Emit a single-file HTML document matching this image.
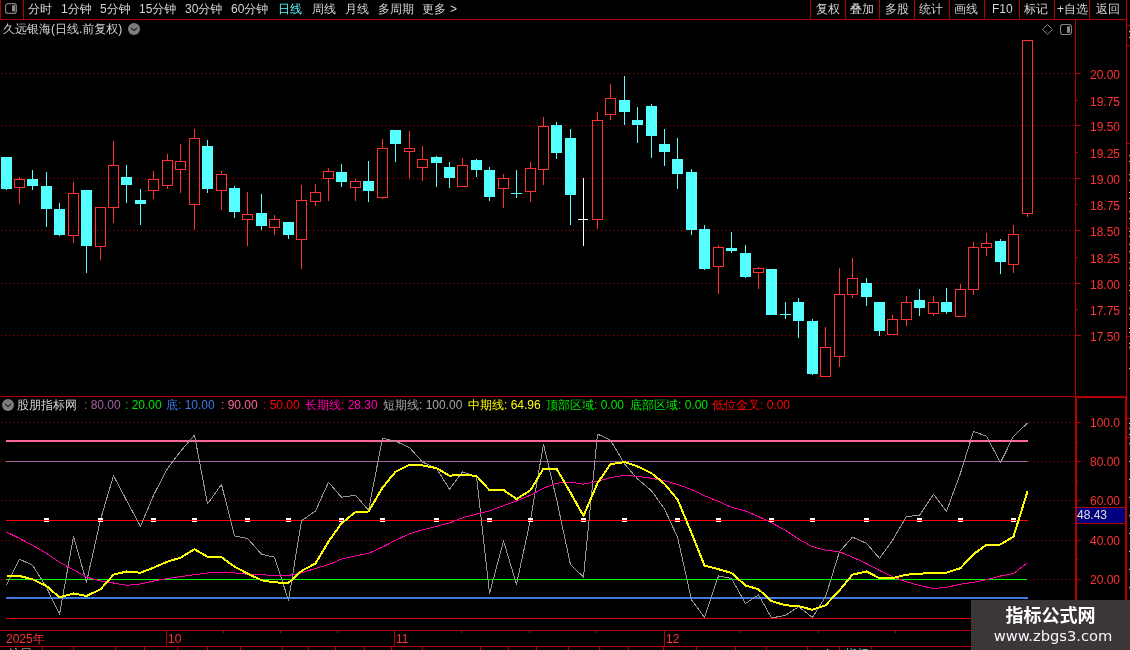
<!DOCTYPE html>
<html><head><meta charset="utf-8"><title>chart</title>
<style>
html,body{margin:0;padding:0;background:#000;}
body{width:1130px;height:650px;position:relative;overflow:hidden;font-family:"Liberation Sans","WenQuanYi Zen Hei","Noto Sans CJK SC",sans-serif;}
.t{position:absolute;white-space:nowrap;line-height:14px;font-size:12px;font-family:"Liberation Sans","WenQuanYi Zen Hei","Noto Sans CJK SC",sans-serif;}
svg{position:absolute;left:0;top:0;}
</style></head><body>
<svg width="1130" height="650" viewBox="0 0 1130 650" shape-rendering="crispEdges">
<line x1="1" y1="73.5" x2="1075" y2="73.5" stroke="#b00000" stroke-width="1" stroke-dasharray="1 3"/>
<line x1="1" y1="125.5" x2="1075" y2="125.5" stroke="#b00000" stroke-width="1" stroke-dasharray="1 3"/>
<line x1="1" y1="178.5" x2="1075" y2="178.5" stroke="#b00000" stroke-width="1" stroke-dasharray="1 3"/>
<line x1="1" y1="230.5" x2="1075" y2="230.5" stroke="#b00000" stroke-width="1" stroke-dasharray="1 3"/>
<line x1="1" y1="283.5" x2="1075" y2="283.5" stroke="#b00000" stroke-width="1" stroke-dasharray="1 3"/>
<line x1="1" y1="335.5" x2="1075" y2="335.5" stroke="#b00000" stroke-width="1" stroke-dasharray="1 3"/>
<line x1="1" y1="422.5" x2="1075" y2="422.5" stroke="#b00000" stroke-width="1" stroke-dasharray="1 3"/>
<line x1="1" y1="461.5" x2="1075" y2="461.5" stroke="#b00000" stroke-width="1" stroke-dasharray="1 3"/>
<line x1="1" y1="500.5" x2="1075" y2="500.5" stroke="#b00000" stroke-width="1" stroke-dasharray="1 3"/>
<line x1="1" y1="540.5" x2="1075" y2="540.5" stroke="#b00000" stroke-width="1" stroke-dasharray="1 3"/>
<line x1="1" y1="579.5" x2="1075" y2="579.5" stroke="#b00000" stroke-width="1" stroke-dasharray="1 3"/>
<rect x="0" y="19" width="1127" height="1" fill="#b40000"/>
<rect x="0" y="0" width="1" height="20" fill="#b40000"/>
<rect x="23" y="0" width="1" height="20" fill="#b40000"/>
<rect x="810" y="0" width="1" height="19" fill="#b40000"/>
<rect x="845" y="0" width="1" height="19" fill="#b40000"/>
<rect x="879" y="0" width="1" height="19" fill="#b40000"/>
<rect x="914" y="0" width="1" height="19" fill="#b40000"/>
<rect x="949" y="0" width="1" height="19" fill="#b40000"/>
<rect x="984" y="0" width="1" height="19" fill="#b40000"/>
<rect x="1019" y="0" width="1" height="19" fill="#b40000"/>
<rect x="1054" y="0" width="1" height="19" fill="#b40000"/>
<rect x="1089" y="0" width="1" height="19" fill="#b40000"/>
<rect x="1126" y="0" width="1" height="650" fill="#b40000"/>
<rect x="1075" y="20" width="1" height="377" fill="#b40000"/>
<rect x="0" y="396" width="1075" height="1" fill="#b40000"/>
<rect x="1075" y="396" width="52" height="2" fill="#b40000"/>
<rect x="1075" y="396" width="2" height="235" fill="#b40000"/>
<rect x="1125" y="396" width="2" height="235" fill="#b40000"/>
<rect x="0" y="630" width="1127" height="1" fill="#b40000"/>
<rect x="0" y="646" width="971" height="1" fill="#b40000"/>
<rect x="1076" y="73" width="5" height="1" fill="#b40000"/>
<rect x="1076" y="100" width="2" height="1" fill="#b40000"/>
<rect x="1076" y="125" width="5" height="1" fill="#b40000"/>
<rect x="1076" y="152" width="2" height="1" fill="#b40000"/>
<rect x="1076" y="178" width="5" height="1" fill="#b40000"/>
<rect x="1076" y="204" width="2" height="1" fill="#b40000"/>
<rect x="1076" y="230" width="5" height="1" fill="#b40000"/>
<rect x="1076" y="257" width="2" height="1" fill="#b40000"/>
<rect x="1076" y="283" width="5" height="1" fill="#b40000"/>
<rect x="1076" y="309" width="2" height="1" fill="#b40000"/>
<rect x="1076" y="335" width="5" height="1" fill="#b40000"/>
<rect x="1077" y="422" width="4" height="1" fill="#b40000"/>
<rect x="1077" y="461" width="4" height="1" fill="#b40000"/>
<rect x="1077" y="500" width="4" height="1" fill="#b40000"/>
<rect x="1077" y="540" width="4" height="1" fill="#b40000"/>
<rect x="1077" y="579" width="4" height="1" fill="#b40000"/>
<rect x="1077" y="442" width="1" height="1" fill="#b40000"/>
<rect x="1077" y="481" width="1" height="1" fill="#b40000"/>
<rect x="1077" y="520" width="1" height="1" fill="#b40000"/>
<rect x="1077" y="559" width="1" height="1" fill="#b40000"/>
<rect x="1127" y="25" width="3" height="1" fill="#b40000"/>
<rect x="1127" y="45" width="3" height="1" fill="#b40000"/>
<rect x="1127" y="143" width="3" height="1" fill="#b40000"/>
<rect x="1127" y="228" width="3" height="1" fill="#b40000"/>
<rect x="1127" y="336" width="3" height="1" fill="#b40000"/>
<rect x="1127" y="418" width="3" height="1" fill="#b40000"/>
<rect x="1127" y="437" width="3" height="1" fill="#b40000"/>
<rect x="1129" y="31" width="1" height="1" fill="#c0c0c0"/>
<rect x="1129" y="37" width="1" height="1" fill="#c0c0c0"/>
<rect x="1129" y="155" width="1" height="1" fill="#c0c0c0"/>
<rect x="1129" y="161" width="1" height="1" fill="#c0c0c0"/>
<rect x="1129" y="174" width="1" height="1" fill="#c0c0c0"/>
<rect x="1129" y="180" width="1" height="1" fill="#c0c0c0"/>
<rect x="1129" y="192" width="1" height="1" fill="#c0c0c0"/>
<rect x="1129" y="198" width="1" height="1" fill="#c0c0c0"/>
<rect x="1129" y="211" width="1" height="1" fill="#c0c0c0"/>
<rect x="1129" y="218" width="1" height="1" fill="#c0c0c0"/>
<rect x="1129" y="231" width="1" height="1" fill="#c0c0c0"/>
<rect x="1129" y="236" width="1" height="1" fill="#c0c0c0"/>
<rect x="1129" y="244" width="1" height="1" fill="#c0c0c0"/>
<rect x="1129" y="251" width="1" height="1" fill="#c0c0c0"/>
<rect x="1129" y="262" width="1" height="1" fill="#c0c0c0"/>
<rect x="1129" y="268" width="1" height="1" fill="#c0c0c0"/>
<rect x="1129" y="285" width="1" height="1" fill="#c0c0c0"/>
<rect x="1129" y="290" width="1" height="1" fill="#c0c0c0"/>
<rect x="1129" y="308" width="1" height="1" fill="#c0c0c0"/>
<rect x="1129" y="314" width="1" height="1" fill="#c0c0c0"/>
<rect x="1129" y="328" width="1" height="1" fill="#c0c0c0"/>
<rect x="1129" y="332" width="1" height="1" fill="#c0c0c0"/>
<rect x="1129" y="343" width="1" height="1" fill="#c0c0c0"/>
<rect x="1129" y="347" width="1" height="1" fill="#c0c0c0"/>
<rect x="1129" y="368" width="1" height="1" fill="#c0c0c0"/>
<rect x="1129" y="423" width="1" height="1" fill="#c0c0c0"/>
<rect x="1129" y="428" width="1" height="1" fill="#c0c0c0"/>
<rect x="1129" y="434" width="1" height="1" fill="#c0c0c0"/>
<rect x="1129" y="443" width="1" height="1" fill="#c0c0c0"/>
<rect x="1129" y="461" width="1" height="1" fill="#c0c0c0"/>
<rect x="1129" y="479" width="1" height="1" fill="#c0c0c0"/>
<rect x="1129" y="497" width="1" height="1" fill="#c0c0c0"/>
<rect x="1129" y="515" width="1" height="1" fill="#c0c0c0"/>
<rect x="1129" y="533" width="1" height="1" fill="#c0c0c0"/>
<rect x="1129" y="551" width="1" height="1" fill="#c0c0c0"/>
<rect x="1129" y="569" width="1" height="1" fill="#c0c0c0"/>
<rect x="1129" y="587" width="1" height="1" fill="#c0c0c0"/>
<rect x="6" y="157" width="1" height="33" fill="#54ffff"/>
<rect x="1" y="157" width="11" height="32" fill="#54ffff"/>
<rect x="19" y="177" width="1" height="2" fill="#ff3232"/>
<rect x="19" y="188" width="1" height="16" fill="#ff3232"/>
<rect x="14.5" y="179.5" width="10" height="8" fill="none" stroke="#ff3232" stroke-width="1"/>
<rect x="32" y="170" width="1" height="20" fill="#54ffff"/>
<rect x="27" y="179" width="11" height="7" fill="#54ffff"/>
<rect x="46" y="172" width="1" height="55" fill="#54ffff"/>
<rect x="41" y="186" width="11" height="23" fill="#54ffff"/>
<rect x="59" y="203" width="1" height="33" fill="#54ffff"/>
<rect x="54" y="209" width="11" height="26" fill="#54ffff"/>
<rect x="73" y="182" width="1" height="11" fill="#ff3232"/>
<rect x="73" y="236" width="1" height="7" fill="#ff3232"/>
<rect x="68.5" y="193.5" width="10" height="42" fill="none" stroke="#ff3232" stroke-width="1"/>
<rect x="86" y="190" width="1" height="83" fill="#54ffff"/>
<rect x="81" y="190" width="11" height="56" fill="#54ffff"/>
<rect x="100" y="247" width="1" height="13" fill="#ff3232"/>
<rect x="95.5" y="207.5" width="10" height="39" fill="none" stroke="#ff3232" stroke-width="1"/>
<rect x="113" y="141" width="1" height="24" fill="#ff3232"/>
<rect x="113" y="208" width="1" height="15" fill="#ff3232"/>
<rect x="108.5" y="165.5" width="10" height="42" fill="none" stroke="#ff3232" stroke-width="1"/>
<rect x="126" y="165" width="1" height="38" fill="#54ffff"/>
<rect x="121" y="177" width="11" height="8" fill="#54ffff"/>
<rect x="140" y="189" width="1" height="36" fill="#54ffff"/>
<rect x="135" y="200" width="11" height="4" fill="#54ffff"/>
<rect x="153" y="171" width="1" height="8" fill="#ff3232"/>
<rect x="153" y="191" width="1" height="8" fill="#ff3232"/>
<rect x="148.5" y="179.5" width="10" height="11" fill="none" stroke="#ff3232" stroke-width="1"/>
<rect x="167" y="154" width="1" height="6" fill="#ff3232"/>
<rect x="167" y="186" width="1" height="3" fill="#ff3232"/>
<rect x="162.5" y="160.5" width="10" height="25" fill="none" stroke="#ff3232" stroke-width="1"/>
<rect x="180" y="144" width="1" height="17" fill="#ff3232"/>
<rect x="180" y="170" width="1" height="23" fill="#ff3232"/>
<rect x="175.5" y="161.5" width="10" height="8" fill="none" stroke="#ff3232" stroke-width="1"/>
<rect x="194" y="129" width="1" height="9" fill="#ff3232"/>
<rect x="194" y="205" width="1" height="25" fill="#ff3232"/>
<rect x="189.5" y="138.5" width="10" height="66" fill="none" stroke="#ff3232" stroke-width="1"/>
<rect x="207" y="140" width="1" height="53" fill="#54ffff"/>
<rect x="202" y="146" width="11" height="43" fill="#54ffff"/>
<rect x="221" y="171" width="1" height="3" fill="#ff3232"/>
<rect x="221" y="191" width="1" height="19" fill="#ff3232"/>
<rect x="216.5" y="174.5" width="10" height="16" fill="none" stroke="#ff3232" stroke-width="1"/>
<rect x="234" y="186" width="1" height="32" fill="#54ffff"/>
<rect x="229" y="188" width="11" height="24" fill="#54ffff"/>
<rect x="247" y="192" width="1" height="22" fill="#ff3232"/>
<rect x="247" y="220" width="1" height="26" fill="#ff3232"/>
<rect x="242.5" y="214.5" width="10" height="5" fill="none" stroke="#ff3232" stroke-width="1"/>
<rect x="261" y="194" width="1" height="36" fill="#54ffff"/>
<rect x="256" y="213" width="11" height="13" fill="#54ffff"/>
<rect x="274" y="215" width="1" height="4" fill="#ff3232"/>
<rect x="274" y="228" width="1" height="7" fill="#ff3232"/>
<rect x="269.5" y="219.5" width="10" height="8" fill="none" stroke="#ff3232" stroke-width="1"/>
<rect x="288" y="222" width="1" height="17" fill="#54ffff"/>
<rect x="283" y="222" width="11" height="13" fill="#54ffff"/>
<rect x="301" y="185" width="1" height="15" fill="#ff3232"/>
<rect x="301" y="240" width="1" height="29" fill="#ff3232"/>
<rect x="296.5" y="200.5" width="10" height="39" fill="none" stroke="#ff3232" stroke-width="1"/>
<rect x="315" y="184" width="1" height="8" fill="#ff3232"/>
<rect x="315" y="202" width="1" height="4" fill="#ff3232"/>
<rect x="310.5" y="192.5" width="10" height="9" fill="none" stroke="#ff3232" stroke-width="1"/>
<rect x="328" y="168" width="1" height="3" fill="#ff3232"/>
<rect x="328" y="179" width="1" height="22" fill="#ff3232"/>
<rect x="323.5" y="171.5" width="10" height="7" fill="none" stroke="#ff3232" stroke-width="1"/>
<rect x="341" y="164" width="1" height="23" fill="#54ffff"/>
<rect x="336" y="172" width="11" height="10" fill="#54ffff"/>
<rect x="355" y="179" width="1" height="2" fill="#ff3232"/>
<rect x="355" y="188" width="1" height="13" fill="#ff3232"/>
<rect x="350.5" y="181.5" width="10" height="6" fill="none" stroke="#ff3232" stroke-width="1"/>
<rect x="368" y="161" width="1" height="41" fill="#54ffff"/>
<rect x="363" y="181" width="11" height="10" fill="#54ffff"/>
<rect x="382" y="139" width="1" height="9" fill="#ff3232"/>
<rect x="382" y="198" width="1" height="1" fill="#ff3232"/>
<rect x="377.5" y="148.5" width="10" height="49" fill="none" stroke="#ff3232" stroke-width="1"/>
<rect x="395" y="130" width="1" height="32" fill="#54ffff"/>
<rect x="390" y="130" width="11" height="14" fill="#54ffff"/>
<rect x="409" y="131" width="1" height="17" fill="#ff3232"/>
<rect x="409" y="152" width="1" height="26" fill="#ff3232"/>
<rect x="404.5" y="148.5" width="10" height="3" fill="none" stroke="#ff3232" stroke-width="1"/>
<rect x="422" y="146" width="1" height="13" fill="#ff3232"/>
<rect x="422" y="168" width="1" height="13" fill="#ff3232"/>
<rect x="417.5" y="159.5" width="10" height="8" fill="none" stroke="#ff3232" stroke-width="1"/>
<rect x="436" y="156" width="1" height="31" fill="#54ffff"/>
<rect x="431" y="157" width="11" height="6" fill="#54ffff"/>
<rect x="449" y="162" width="1" height="26" fill="#54ffff"/>
<rect x="444" y="167" width="11" height="11" fill="#54ffff"/>
<rect x="462" y="158" width="1" height="7" fill="#ff3232"/>
<rect x="457.5" y="165.5" width="10" height="21" fill="none" stroke="#ff3232" stroke-width="1"/>
<rect x="476" y="159" width="1" height="18" fill="#54ffff"/>
<rect x="471" y="160" width="11" height="10" fill="#54ffff"/>
<rect x="489" y="167" width="1" height="34" fill="#54ffff"/>
<rect x="484" y="170" width="11" height="27" fill="#54ffff"/>
<rect x="503" y="174" width="1" height="4" fill="#ff3232"/>
<rect x="503" y="189" width="1" height="19" fill="#ff3232"/>
<rect x="498.5" y="178.5" width="10" height="10" fill="none" stroke="#ff3232" stroke-width="1"/>
<rect x="516" y="170" width="1" height="28" fill="#54ffff"/>
<rect x="511" y="193" width="11" height="1" fill="#54ffff"/>
<rect x="530" y="162" width="1" height="6" fill="#ff3232"/>
<rect x="530" y="192" width="1" height="10" fill="#ff3232"/>
<rect x="525.5" y="168.5" width="10" height="23" fill="none" stroke="#ff3232" stroke-width="1"/>
<rect x="543" y="117" width="1" height="9" fill="#ff3232"/>
<rect x="543" y="170" width="1" height="15" fill="#ff3232"/>
<rect x="538.5" y="126.5" width="10" height="43" fill="none" stroke="#ff3232" stroke-width="1"/>
<rect x="556" y="122" width="1" height="37" fill="#54ffff"/>
<rect x="551" y="125" width="11" height="28" fill="#54ffff"/>
<rect x="570" y="129" width="1" height="96" fill="#54ffff"/>
<rect x="565" y="138" width="11" height="57" fill="#54ffff"/>
<rect x="583" y="178" width="1" height="68" fill="#ffffff"/>
<rect x="578" y="219" width="10" height="1" fill="#ffffff"/>
<rect x="597" y="112" width="1" height="8" fill="#ff3232"/>
<rect x="597" y="220" width="1" height="9" fill="#ff3232"/>
<rect x="592.5" y="120.5" width="10" height="99" fill="none" stroke="#ff3232" stroke-width="1"/>
<rect x="610" y="84" width="1" height="14" fill="#ff3232"/>
<rect x="610" y="115" width="1" height="5" fill="#ff3232"/>
<rect x="605.5" y="98.5" width="10" height="16" fill="none" stroke="#ff3232" stroke-width="1"/>
<rect x="624" y="76" width="1" height="49" fill="#54ffff"/>
<rect x="619" y="100" width="11" height="12" fill="#54ffff"/>
<rect x="637" y="107" width="1" height="36" fill="#54ffff"/>
<rect x="632" y="120" width="11" height="5" fill="#54ffff"/>
<rect x="651" y="104" width="1" height="54" fill="#54ffff"/>
<rect x="646" y="106" width="11" height="30" fill="#54ffff"/>
<rect x="664" y="129" width="1" height="37" fill="#54ffff"/>
<rect x="659" y="144" width="11" height="8" fill="#54ffff"/>
<rect x="677" y="138" width="1" height="51" fill="#54ffff"/>
<rect x="672" y="159" width="11" height="15" fill="#54ffff"/>
<rect x="691" y="169" width="1" height="66" fill="#54ffff"/>
<rect x="686" y="172" width="11" height="58" fill="#54ffff"/>
<rect x="704" y="225" width="1" height="45" fill="#54ffff"/>
<rect x="699" y="229" width="11" height="40" fill="#54ffff"/>
<rect x="718" y="245" width="1" height="2" fill="#ff3232"/>
<rect x="718" y="267" width="1" height="27" fill="#ff3232"/>
<rect x="713.5" y="247.5" width="10" height="19" fill="none" stroke="#ff3232" stroke-width="1"/>
<rect x="731" y="232" width="1" height="21" fill="#54ffff"/>
<rect x="726" y="248" width="11" height="3" fill="#54ffff"/>
<rect x="745" y="245" width="1" height="33" fill="#54ffff"/>
<rect x="740" y="253" width="11" height="24" fill="#54ffff"/>
<rect x="758" y="267" width="1" height="1" fill="#ff3232"/>
<rect x="758" y="273" width="1" height="16" fill="#ff3232"/>
<rect x="753.5" y="268.5" width="10" height="4" fill="none" stroke="#ff3232" stroke-width="1"/>
<rect x="771" y="269" width="1" height="46" fill="#54ffff"/>
<rect x="766" y="269" width="11" height="46" fill="#54ffff"/>
<rect x="785" y="302" width="1" height="17" fill="#54ffff"/>
<rect x="780" y="314" width="11" height="1" fill="#54ffff"/>
<rect x="798" y="298" width="1" height="40" fill="#54ffff"/>
<rect x="793" y="302" width="11" height="19" fill="#54ffff"/>
<rect x="812" y="319" width="1" height="56" fill="#54ffff"/>
<rect x="807" y="321" width="11" height="53" fill="#54ffff"/>
<rect x="825" y="327" width="1" height="20" fill="#ff3232"/>
<rect x="820.5" y="347.5" width="10" height="29" fill="none" stroke="#ff3232" stroke-width="1"/>
<rect x="839" y="268" width="1" height="26" fill="#ff3232"/>
<rect x="839" y="357" width="1" height="10" fill="#ff3232"/>
<rect x="834.5" y="294.5" width="10" height="62" fill="none" stroke="#ff3232" stroke-width="1"/>
<rect x="852" y="258" width="1" height="20" fill="#ff3232"/>
<rect x="852" y="295" width="1" height="3" fill="#ff3232"/>
<rect x="847.5" y="278.5" width="10" height="16" fill="none" stroke="#ff3232" stroke-width="1"/>
<rect x="866" y="278" width="1" height="28" fill="#54ffff"/>
<rect x="861" y="283" width="11" height="14" fill="#54ffff"/>
<rect x="879" y="302" width="1" height="34" fill="#54ffff"/>
<rect x="874" y="302" width="11" height="29" fill="#54ffff"/>
<rect x="892" y="315" width="1" height="4" fill="#ff3232"/>
<rect x="887.5" y="319.5" width="10" height="15" fill="none" stroke="#ff3232" stroke-width="1"/>
<rect x="906" y="296" width="1" height="6" fill="#ff3232"/>
<rect x="906" y="320" width="1" height="6" fill="#ff3232"/>
<rect x="901.5" y="302.5" width="10" height="17" fill="none" stroke="#ff3232" stroke-width="1"/>
<rect x="919" y="289" width="1" height="27" fill="#54ffff"/>
<rect x="914" y="300" width="11" height="8" fill="#54ffff"/>
<rect x="933" y="296" width="1" height="6" fill="#ff3232"/>
<rect x="933" y="314" width="1" height="2" fill="#ff3232"/>
<rect x="928.5" y="302.5" width="10" height="11" fill="none" stroke="#ff3232" stroke-width="1"/>
<rect x="946" y="288" width="1" height="26" fill="#54ffff"/>
<rect x="941" y="302" width="11" height="10" fill="#54ffff"/>
<rect x="960" y="284" width="1" height="5" fill="#ff3232"/>
<rect x="955.5" y="289.5" width="10" height="27" fill="none" stroke="#ff3232" stroke-width="1"/>
<rect x="973" y="242" width="1" height="5" fill="#ff3232"/>
<rect x="973" y="290" width="1" height="5" fill="#ff3232"/>
<rect x="968.5" y="247.5" width="10" height="42" fill="none" stroke="#ff3232" stroke-width="1"/>
<rect x="986" y="233" width="1" height="10" fill="#ff3232"/>
<rect x="986" y="248" width="1" height="8" fill="#ff3232"/>
<rect x="981.5" y="243.5" width="10" height="4" fill="none" stroke="#ff3232" stroke-width="1"/>
<rect x="1000" y="239" width="1" height="35" fill="#54ffff"/>
<rect x="995" y="241" width="11" height="21" fill="#54ffff"/>
<rect x="1013" y="225" width="1" height="9" fill="#ff3232"/>
<rect x="1013" y="265" width="1" height="8" fill="#ff3232"/>
<rect x="1008.5" y="234.5" width="10" height="30" fill="none" stroke="#ff3232" stroke-width="1"/>
<rect x="1027" y="214" width="1" height="3" fill="#ff3232"/>
<rect x="1022.5" y="40.5" width="10" height="173" fill="none" stroke="#ff3232" stroke-width="1"/>
<rect x="6" y="440" width="1022" height="2" fill="#ff6699"/>
<rect x="6" y="461" width="1022" height="1" fill="#a066a0"/>
<rect x="6" y="520" width="1022" height="1" fill="#ff0000"/>
<rect x="6" y="579" width="1021" height="1" fill="#00ff00"/>
<rect x="6" y="597" width="1022" height="2" fill="#4078e0"/>
<rect x="6" y="618" width="1022" height="1" fill="#e60000"/>
<polyline points="6.5,584.8 19.5,559.2 32.5,565.2 46.5,587.3 59.5,614.4 73.5,536.4 86.5,582.3 100.5,519.6 113.5,475.7 126.5,500.3 140.5,526.4 153.5,495.3 167.5,468.5 180.5,451.4 194.5,435.1 207.5,504.0 221.5,484.5 234.5,535.9 247.5,538.4 261.5,554.2 274.5,557.2 288.5,600.3 301.5,520.8 315.5,511.0 328.5,482.2 341.5,497.2 355.5,495.2 368.5,510.3 382.5,438.3 395.5,441.1 409.5,447.6 422.5,462.1 436.5,468.4 449.5,489.2 462.5,471.7 476.5,476.4 489.5,593.5 503.5,541.0 516.5,584.3 530.5,519.6 543.5,444.3 556.5,499.0 570.5,564.7 583.5,577.0 597.5,434.1 610.5,440.1 624.5,463.9 637.5,478.9 651.5,490.7 664.5,509.0 677.5,537.1 691.5,599.8 704.5,617.4 718.5,576.0 731.5,578.5 745.5,603.6 758.5,594.8 771.5,617.9 785.5,615.4 798.5,606.8 812.5,617.4 825.5,596.8 839.5,551.7 852.5,537.1 866.5,543.4 879.5,558.4 892.5,540.3 906.5,516.5 919.5,515.3 933.5,494.2 946.5,511.3 960.5,473.2 973.5,431.3 986.5,436.3 1000.5,462.6 1013.5,436.3 1027.5,423.0" fill="none" stroke="#969696" stroke-width="1" stroke-linejoin="round"/>
<polyline points="6.5,532.1 19.5,538.4 32.5,545.2 46.5,553.4 59.5,562.2 73.5,569.7 86.5,577.2 100.5,581.0 113.5,583.0 126.5,585.3 140.5,584.0 153.5,581.0 167.5,578.5 180.5,576.7 194.5,574.7 207.5,573.0 221.5,572.2 234.5,573.0 247.5,574.2 261.5,574.7 274.5,575.5 288.5,575.4 301.5,572.9 315.5,568.4 328.5,564.7 341.5,559.1 355.5,555.9 368.5,553.4 382.5,547.1 395.5,540.3 409.5,533.8 422.5,529.8 436.5,526.3 449.5,522.8 462.5,517.8 476.5,514.0 489.5,510.8 503.5,505.7 516.5,501.0 530.5,495.2 543.5,488.2 556.5,483.2 570.5,482.2 583.5,484.2 597.5,481.2 610.5,477.7 624.5,475.2 637.5,476.4 651.5,478.2 664.5,480.9 677.5,484.4 691.5,489.5 704.5,495.7 718.5,501.5 731.5,507.3 745.5,511.0 758.5,516.5 771.5,522.8 785.5,530.3 798.5,539.1 812.5,546.7 825.5,550.2 839.5,551.7 852.5,557.2 866.5,563.5 879.5,570.5 892.5,576.7 906.5,581.8 919.5,585.5 933.5,588.5 946.5,587.3 960.5,584.3 973.5,582.3 986.5,579.8 1000.5,576.0 1013.5,573.5 1027.5,562.7" fill="none" stroke="#ff00a8" stroke-width="1" stroke-linejoin="round"/>
<polyline points="6.5,576.0 19.5,576.0 32.5,579.3 46.5,586.0 59.5,597.3 73.5,593.5 86.5,596.0 100.5,589.3 113.5,574.7 126.5,571.5 140.5,572.7 153.5,567.7 167.5,561.7 180.5,557.7 194.5,549.2 207.5,556.7 221.5,557.2 234.5,566.7 247.5,573.5 261.5,580.3 274.5,582.4 288.5,582.8 301.5,571.0 315.5,563.4 328.5,541.6 341.5,523.3 355.5,512.0 368.5,511.5 382.5,487.7 395.5,471.7 409.5,464.9 422.5,465.4 436.5,468.1 449.5,475.7 462.5,474.7 476.5,475.9 489.5,490.2 503.5,490.0 516.5,499.0 530.5,490.2 543.5,468.6 556.5,468.6 570.5,492.7 583.5,516.0 597.5,483.2 610.5,464.1 624.5,462.1 637.5,466.4 651.5,473.2 664.5,483.9 677.5,499.5 691.5,532.8 704.5,565.5 718.5,569.2 731.5,573.0 745.5,585.5 758.5,589.3 771.5,601.1 785.5,605.3 798.5,606.1 812.5,609.8 825.5,605.3 839.5,590.3 852.5,574.7 866.5,571.4 879.5,578.2 892.5,578.2 906.5,574.7 919.5,573.8 933.5,572.6 946.5,572.6 960.5,568.2 973.5,554.2 986.5,544.8 1000.5,544.5 1013.5,536.5 1027.5,491.5" fill="none" stroke="#ffff00" stroke-width="2" stroke-linejoin="round"/>
<rect x="44" y="518" width="5" height="2" fill="#ffffff"/>
<rect x="44" y="521" width="5" height="1" fill="#ffffff"/>
<rect x="98" y="518" width="5" height="2" fill="#ffffff"/>
<rect x="98" y="521" width="5" height="1" fill="#ffffff"/>
<rect x="151" y="518" width="5" height="2" fill="#ffffff"/>
<rect x="151" y="521" width="5" height="1" fill="#ffffff"/>
<rect x="192" y="518" width="5" height="2" fill="#ffffff"/>
<rect x="192" y="521" width="5" height="1" fill="#ffffff"/>
<rect x="245" y="518" width="5" height="2" fill="#ffffff"/>
<rect x="245" y="521" width="5" height="1" fill="#ffffff"/>
<rect x="286" y="518" width="5" height="2" fill="#ffffff"/>
<rect x="286" y="521" width="5" height="1" fill="#ffffff"/>
<rect x="339" y="518" width="5" height="2" fill="#ffffff"/>
<rect x="339" y="521" width="5" height="1" fill="#ffffff"/>
<rect x="380" y="518" width="5" height="2" fill="#ffffff"/>
<rect x="380" y="521" width="5" height="1" fill="#ffffff"/>
<rect x="434" y="518" width="5" height="2" fill="#ffffff"/>
<rect x="434" y="521" width="5" height="1" fill="#ffffff"/>
<rect x="487" y="518" width="5" height="2" fill="#ffffff"/>
<rect x="487" y="521" width="5" height="1" fill="#ffffff"/>
<rect x="528" y="518" width="5" height="2" fill="#ffffff"/>
<rect x="528" y="521" width="5" height="1" fill="#ffffff"/>
<rect x="581" y="518" width="5" height="2" fill="#ffffff"/>
<rect x="581" y="521" width="5" height="1" fill="#ffffff"/>
<rect x="622" y="518" width="5" height="2" fill="#ffffff"/>
<rect x="622" y="521" width="5" height="1" fill="#ffffff"/>
<rect x="675" y="518" width="5" height="2" fill="#ffffff"/>
<rect x="675" y="521" width="5" height="1" fill="#ffffff"/>
<rect x="716" y="518" width="5" height="2" fill="#ffffff"/>
<rect x="716" y="521" width="5" height="1" fill="#ffffff"/>
<rect x="769" y="518" width="5" height="2" fill="#ffffff"/>
<rect x="769" y="521" width="5" height="1" fill="#ffffff"/>
<rect x="810" y="518" width="5" height="2" fill="#ffffff"/>
<rect x="810" y="521" width="5" height="1" fill="#ffffff"/>
<rect x="864" y="518" width="5" height="2" fill="#ffffff"/>
<rect x="864" y="521" width="5" height="1" fill="#ffffff"/>
<rect x="917" y="518" width="5" height="2" fill="#ffffff"/>
<rect x="917" y="521" width="5" height="1" fill="#ffffff"/>
<rect x="958" y="518" width="5" height="2" fill="#ffffff"/>
<rect x="958" y="521" width="5" height="1" fill="#ffffff"/>
<rect x="1011" y="518" width="5" height="2" fill="#ffffff"/>
<rect x="1011" y="521" width="5" height="1" fill="#ffffff"/>
<rect x="166" y="630" width="1" height="16" fill="#b40000"/>
<rect x="394" y="630" width="1" height="16" fill="#b40000"/>
<rect x="664" y="630" width="1" height="16" fill="#b40000"/>
<rect x="223" y="630" width="1" height="3" fill="#b40000"/>
<rect x="280" y="630" width="1" height="3" fill="#b40000"/>
<rect x="337" y="630" width="1" height="3" fill="#b40000"/>
<rect x="461" y="630" width="1" height="3" fill="#b40000"/>
<rect x="529" y="630" width="1" height="3" fill="#b40000"/>
<rect x="596" y="630" width="1" height="3" fill="#b40000"/>
<rect x="740" y="630" width="1" height="3" fill="#b40000"/>
<rect x="818" y="630" width="1" height="3" fill="#b40000"/>
<rect x="895" y="630" width="1" height="3" fill="#b40000"/>
<rect x="42" y="646" width="1" height="4" fill="#b40000"/>
<rect x="73" y="646" width="1" height="4" fill="#b40000"/>
<rect x="115" y="646" width="1" height="4" fill="#b40000"/>
<rect x="144" y="646" width="1" height="4" fill="#b40000"/>
<rect x="177" y="646" width="1" height="4" fill="#b40000"/>
<rect x="207" y="646" width="1" height="4" fill="#b40000"/>
<rect x="240" y="646" width="1" height="4" fill="#b40000"/>
<rect x="282" y="646" width="1" height="4" fill="#b40000"/>
<rect x="308" y="646" width="1" height="4" fill="#b40000"/>
<rect x="335" y="646" width="1" height="4" fill="#b40000"/>
<rect x="364" y="646" width="1" height="4" fill="#b40000"/>
<rect x="391" y="646" width="1" height="4" fill="#b40000"/>
<rect x="422" y="646" width="1" height="4" fill="#b40000"/>
<rect x="480" y="646" width="1" height="4" fill="#b40000"/>
<rect x="508" y="646" width="1" height="4" fill="#b40000"/>
<rect x="536" y="646" width="1" height="4" fill="#b40000"/>
<rect x="568" y="646" width="1" height="4" fill="#b40000"/>
<rect x="599" y="646" width="1" height="4" fill="#b40000"/>
<rect x="628" y="646" width="1" height="4" fill="#b40000"/>
<rect x="663" y="646" width="1" height="4" fill="#b40000"/>
<rect x="696" y="646" width="1" height="4" fill="#b40000"/>
<rect x="735" y="646" width="1" height="4" fill="#b40000"/>
<rect x="766" y="646" width="1" height="4" fill="#b40000"/>
<rect x="807" y="646" width="1" height="4" fill="#b40000"/>
<rect x="839" y="646" width="1" height="4" fill="#b40000"/>
<rect x="871" y="646" width="1" height="4" fill="#b40000"/>
<g shape-rendering="geometricPrecision">
<rect x="5.6" y="3.6" width="10.8" height="9.8" rx="2.5" fill="none" stroke="#808080" stroke-width="1.2"/>
<rect x="12" y="5.3" width="3.3" height="6.2" fill="#8c8c8c"/>
<rect x="1060.5" y="24.5" width="11" height="10" rx="2.5" fill="none" stroke="#858585" stroke-width="1.1"/>
<rect x="1067" y="26.4" width="3" height="6.4" fill="#8c8c8c"/>
<path d="M1047.5 24.5 L1052.5 29.5 L1047.5 34.5 L1042.5 29.5 Z" fill="none" stroke="#8c8c8c" stroke-width="0.9"/>
<circle cx="134" cy="29" r="6" fill="#7d7d7d"/>
<path d="M131 27.8 L134 30.6 L137 27.8" fill="none" stroke="#181818" stroke-width="1.1"/>
<circle cx="8" cy="405" r="6" fill="#7d7d7d"/>
<path d="M5 403.8 L8 406.6 L11 403.8" fill="none" stroke="#181818" stroke-width="1.1"/>
</g>
</svg>
<div id="txt" style="position:absolute;left:0;top:0;width:1130px;height:650px;will-change:transform">
<span class="t" style="left:28px;top:2px;color:#d4d4d4;font-size:12px;">分时</span>
<span class="t" style="left:61px;top:2px;color:#d4d4d4;font-size:12px;">1分钟</span>
<span class="t" style="left:100px;top:2px;color:#d4d4d4;font-size:12px;">5分钟</span>
<span class="t" style="left:139px;top:2px;color:#d4d4d4;font-size:12px;">15分钟</span>
<span class="t" style="left:185px;top:2px;color:#d4d4d4;font-size:12px;">30分钟</span>
<span class="t" style="left:231px;top:2px;color:#d4d4d4;font-size:12px;">60分钟</span>
<span class="t" style="left:278px;top:2px;color:#54ffff;font-size:12px;">日线</span>
<span class="t" style="left:312px;top:2px;color:#d4d4d4;font-size:12px;">周线</span>
<span class="t" style="left:345px;top:2px;color:#d4d4d4;font-size:12px;">月线</span>
<span class="t" style="left:378px;top:2px;color:#d4d4d4;font-size:12px;">多周期</span>
<span class="t" style="left:422px;top:2px;color:#d4d4d4;font-size:12px;">更多</span>
<span class="t" style="left:450px;top:2px;color:#d4d4d4;font-size:12px;">&gt;</span>
<span class="t" style="left:816px;top:2px;color:#d4d4d4;font-size:12px;">复权</span>
<span class="t" style="left:850px;top:2px;color:#d4d4d4;font-size:12px;">叠加</span>
<span class="t" style="left:885px;top:2px;color:#d4d4d4;font-size:12px;">多股</span>
<span class="t" style="left:919px;top:2px;color:#d4d4d4;font-size:12px;">统计</span>
<span class="t" style="left:954px;top:2px;color:#d4d4d4;font-size:12px;">画线</span>
<span class="t" style="left:992px;top:2px;color:#d4d4d4;font-size:12px;">F10</span>
<span class="t" style="left:1024px;top:2px;color:#d4d4d4;font-size:12px;">标记</span>
<span class="t" style="left:1057px;top:2px;color:#d4d4d4;font-size:12px;">+自选</span>
<span class="t" style="left:1096px;top:2px;color:#d4d4d4;font-size:12px;">返回</span>
<span class="t" style="left:3px;top:22px;color:#d4d4d4;font-size:12px;">久远银海(日线.前复权)</span>
<span class="t" style="left:1090px;top:68px;color:#ff3232;font-size:12px;">20.00</span>
<span class="t" style="left:1090px;top:95px;color:#ff3232;font-size:12px;">19.75</span>
<span class="t" style="left:1090px;top:120px;color:#ff3232;font-size:12px;">19.50</span>
<span class="t" style="left:1090px;top:147px;color:#ff3232;font-size:12px;">19.25</span>
<span class="t" style="left:1090px;top:173px;color:#ff3232;font-size:12px;">19.00</span>
<span class="t" style="left:1090px;top:199px;color:#ff3232;font-size:12px;">18.75</span>
<span class="t" style="left:1090px;top:225px;color:#ff3232;font-size:12px;">18.50</span>
<span class="t" style="left:1090px;top:252px;color:#ff3232;font-size:12px;">18.25</span>
<span class="t" style="left:1090px;top:278px;color:#ff3232;font-size:12px;">18.00</span>
<span class="t" style="left:1090px;top:304px;color:#ff3232;font-size:12px;">17.75</span>
<span class="t" style="left:1090px;top:330px;color:#ff3232;font-size:12px;">17.50</span>
<span class="t" style="left:1090px;top:416px;color:#ff3232;font-size:12px;">100.0</span>
<span class="t" style="left:1090px;top:455px;color:#ff3232;font-size:12px;">80.00</span>
<span class="t" style="left:1090px;top:494px;color:#ff3232;font-size:12px;">60.00</span>
<span class="t" style="left:1090px;top:534px;color:#ff3232;font-size:12px;">40.00</span>
<span class="t" style="left:1090px;top:573px;color:#ff3232;font-size:12px;">20.00</span>
<span class="t" style="left:17px;top:398px;color:#d4d4d4;font-size:12px;">股朋指标网</span>
<span class="t" style="left:84px;top:398px;color:#a060a0;font-size:12px;">: 80.00</span>
<span class="t" style="left:125px;top:398px;color:#00e600;font-size:12px;">: 20.00</span>
<span class="t" style="left:166px;top:398px;color:#3c78e6;font-size:12px;">底: 10.00</span>
<span class="t" style="left:221px;top:398px;color:#ff6699;font-size:12px;">: 90.00</span>
<span class="t" style="left:263px;top:398px;color:#ff0000;font-size:12px;">: 50.00</span>
<span class="t" style="left:305px;top:398px;color:#ff00a8;font-size:12px;">长期线: 28.30</span>
<span class="t" style="left:383px;top:398px;color:#a8a8a8;font-size:12px;">短期线: 100.00</span>
<span class="t" style="left:468px;top:398px;color:#ffff00;font-size:12px;">中期线: 64.96</span>
<span class="t" style="left:546px;top:398px;color:#00e600;font-size:12px;">顶部区域: 0.00</span>
<span class="t" style="left:630px;top:398px;color:#00e600;font-size:12px;">底部区域: 0.00</span>
<span class="t" style="left:712px;top:398px;color:#ff0000;font-size:12px;">低位金叉: 0.00</span>
<span class="t" style="left:6px;top:632px;color:#ff3232;font-size:12px;">2025年</span>
<span class="t" style="left:168px;top:632px;color:#ff3232;font-size:12px;">10</span>
<span class="t" style="left:396px;top:632px;color:#ff3232;font-size:12px;">11</span>
<span class="t" style="left:666px;top:632px;color:#ff3232;font-size:12px;">12</span>
<div style="position:absolute;left:1077px;top:507px;width:48px;height:15px;background:#000080;border-top:1px solid #b40000;border-bottom:1px solid #b40000"></div>
<span class="t" style="left:1077px;top:508px;color:#e0e0d0;font-size:12px;">48.43</span>
<span class="t" style="left:8px;top:647px;color:#d0d0d0;font-size:12px;">扩展</span>
<span class="t" style="left:48px;top:647px;color:#d0d0d0;font-size:12px;">∧</span>
<span class="t" style="left:845px;top:647px;color:#54ffff;font-size:12px;">指标</span>
<span class="t" style="left:826px;top:647px;color:#d0d0d0;font-size:12px;">|</span>
<div style="position:absolute;left:971px;top:600px;width:159px;height:50px;background:#3c3636"></div>
<span class="t" style="left:971px;top:606px;width:159px;text-align:center;color:#fff;font-size:18px;line-height:20px;font-weight:bold;font-family:'Liberation Sans','Noto Sans CJK SC',sans-serif">指标公式网</span>
<span class="t" style="left:971px;top:627px;width:164px;text-align:center;color:#f4f4ff;font-size:14.7px;line-height:18px;font-family:'DejaVu Sans','Liberation Sans',sans-serif">www.zbgs3.com</span>
</div>
</body></html>
